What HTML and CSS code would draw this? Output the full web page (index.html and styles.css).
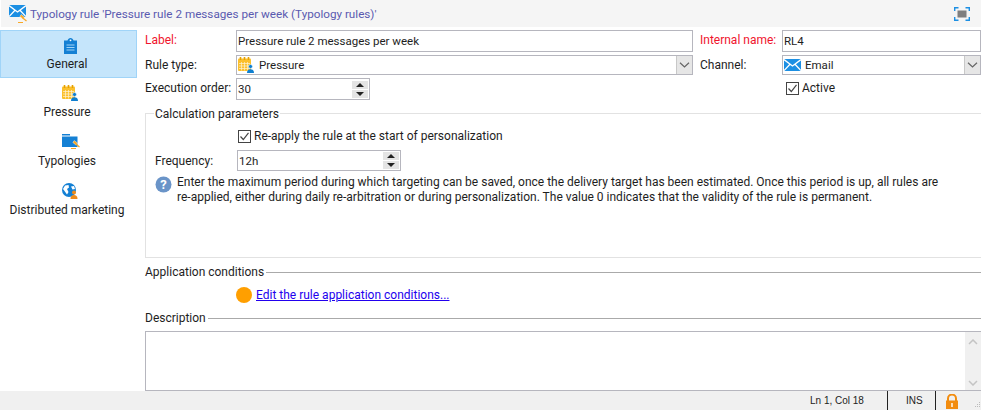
FILE: index.html
```html
<!DOCTYPE html>
<html lang="en">
<head>
<meta charset="utf-8">
<title>Typology rule</title>
<link rel="stylesheet" href="styles.css">
</head>
<body>
<svg class="defs" width="0" height="0" aria-hidden="true">
  <defs>
    <symbol id="i-mail" viewBox="0 0 17 12"><rect width="17" height="12" fill="#1c8fe3"/><path d="M0 .6 8.5 7 17 .6M0 11.6 6 5.2M17 11.6 11 5.2" fill="none" stroke="#fff" stroke-width="1.3"/></symbol>
    <symbol id="i-cal" viewBox="0 0 16 16"><rect x="0" y="1.500" width="13" height="12.500" rx="1" fill="#fbc02d"/><path d="M2.500 0v3M6.500 0v3M10.500 0v3" stroke="#e6a100" stroke-width="1.600"/><path d="M1 6.500h11M1 9h11M1 11.500h11M3.500 5v8.500M6.500 5v8.500M9.500 5v8.500" stroke="#fff" stroke-width=".7" opacity=".8"/><circle cx="12.500" cy="9.500" r="2" fill="#0f7fd0" stroke="#fff" stroke-width=".5"/><path d="M9 16c0-3 1.500-3.800 3.500-3.800S16 13 16 16z" fill="#0f7fd0"/></symbol>
    <symbol id="i-gavel" viewBox="0 0 9 9"><path d="M3.200.5 6.500 3 5 5 1.800 2.500z" fill="#f9a825" stroke="#fff" stroke-width=".4"/><path d="M4.500 3.800 8.500 7" stroke="#f9a825" stroke-width="1.300"/><path d="M0 8h5v1H0z" fill="#f9a825"/></symbol>
  </defs>
</svg>
<div class="window">
  <header class="titlebar">
    <span class="title-icon">
      <svg class="i-mail" width="17" height="12"><use href="#i-mail"/></svg>
      <svg class="i-gavel" width="9" height="9"><use href="#i-gavel"/></svg>
    </span>
    <span class="title-text">Typology rule 'Pressure rule 2 messages per week (Typology rules)'</span>
    <svg class="expand" width="16" height="14" viewBox="0 0 16 14"><path d="M.7 4V.7H4.500M11.500.7h3.800V4M15.300 10v3.300h-3.800M4.500 13.300H.7V10" fill="none" stroke="#1c8fe3" stroke-width="1.400"/><rect x="3.500" y="3.500" width="9" height="7" fill="#7f7f7f"/></svg>
  </header>
  <div class="main">
    <nav class="sidebar">
      <a class="nav-item active">
        <svg width="13" height="16" viewBox="0 0 13 16"><path d="M0 2.500h3.500C4 1 5 0 6.500 0S9 1 9.500 2.500H13V16H0z" fill="#1480d4"/><circle cx="6.500" cy="2.300" r=".9" fill="#fff"/><path d="M2.500 7h8M2.500 9.500h8M2.500 12h8" stroke="#9fd2f5" stroke-width="1"/></svg>
        <span>General</span>
      </a>
      <a class="nav-item">
        <svg width="16" height="16"><use href="#i-cal"/></svg>
        <span>Pressure</span>
      </a>
      <a class="nav-item">
        <span class="nav-typo">
          <svg width="16" height="13" viewBox="0 0 16 13"><path d="M0 0h8v1.500H0zM0 2.500h15.500V13H0z" fill="#1480d4"/></svg>
          <svg class="i-gavel" width="9" height="9"><use href="#i-gavel"/></svg>
        </span>
        <span>Typologies</span>
      </a>
      <a class="nav-item">
        <svg width="16" height="16" viewBox="0 0 16 16"><circle cx="7" cy="7" r="7" fill="#1480d4"/><path d="M3 2.500 6.500 2 7 4.500 5 6 6.500 9 5 11.500 2.500 8 1 6zM9 3.500l3-.5 1 3-2.500.5z" fill="#fff"/><circle cx="12" cy="9.500" r="2" fill="#ef8b1a"/><path d="M8.500 16c0-3 1.500-4 3.500-4s3.500 1 3.500 4z" fill="#ef8b1a"/></svg>
        <span>Distributed marketing</span>
      </a>
    </nav>
    <main class="content">
      <div class="top-form">
        <label class="req">Label:</label>
        <div class="field"><span class="field-text">Pressure rule 2 messages per week</span></div>
        <label class="req col3">Internal name:</label>
        <div class="field"><span class="field-text">RL4</span></div>

        <label>Rule type:</label>
        <div class="field select">
          <svg class="sel-icon" width="16" height="16"><use href="#i-cal"/></svg>
          <span class="field-text">Pressure</span>
          <span class="drop"><svg width="11" height="6" viewBox="0 0 11 6"><path d="M1 .8 5.500 5 10 .8" fill="none" stroke="#666" stroke-width="1.200"/></svg></span>
        </div>
        <label class="col3">Channel:</label>
        <div class="field select">
          <svg class="sel-icon sel-mail" width="17" height="12"><use href="#i-mail"/></svg>
          <span class="field-text">Email</span>
          <span class="drop"><svg width="11" height="6" viewBox="0 0 11 6"><path d="M1 .8 5.500 5 10 .8" fill="none" stroke="#666" stroke-width="1.200"/></svg></span>
        </div>

        <label>Execution order:</label>
        <div class="field spin order">
          <span class="field-text">30</span>
          <span class="spin-btns"><i class="up"></i><i class="down"></i></span>
        </div>
        <span></span>
        <div class="check active-check"><span class="box"><svg width="13" height="13" viewBox="0 0 13 13"><path d="M2.500 6.500 5.300 9.500 10.500 2.800" fill="none" stroke="#444" stroke-width="1.200"/></svg></span><span>Active</span></div>
      </div>

      <fieldset class="params">
        <legend>Calculation parameters</legend>
        <div class="check reapply"><span class="box"><svg width="13" height="13" viewBox="0 0 13 13"><path d="M2.500 6.500 5.300 9.500 10.500 2.800" fill="none" stroke="#444" stroke-width="1.200"/></svg></span><span>Re-apply the rule at the start of personalization</span></div>
        <div class="freq">
          <label>Frequency:</label>
          <div class="field spin freq-field">
            <span class="field-text">12h</span>
            <span class="spin-btns"><i class="up"></i><i class="down"></i></span>
          </div>
        </div>
        <div class="help">
          <svg width="17" height="17" viewBox="0 0 17 17"><circle cx="8.500" cy="8.500" r="8" fill="#6a94c8"/><text x="8.500" y="13" text-anchor="middle" class="help-q">?</text></svg>
          <p>Enter the maximum period during which targeting can be saved, once the delivery target has been estimated. Once this period is up, all rules are re-applied, either during daily re-arbitration or during personalization. The value 0 indicates that the validity of the rule is permanent.</p>
        </div>
      </fieldset>

      <div class="sep first"><span>Application conditions</span><hr></div>
      <div class="cond"><span class="dot"></span><a class="link">Edit the rule application conditions...</a></div>
      <div class="sep desc-sep"><span>Description</span><hr></div>
      <div class="desc">
        <div class="scroll">
          <svg width="10" height="6" viewBox="0 0 10 6"><path d="M1 5 5 1l4 4" fill="none" stroke="#c4c4c4" stroke-width="1.500"/></svg>
          <svg width="10" height="6" viewBox="0 0 10 6"><path d="M1 1l4 4 4-4" fill="none" stroke="#c4c4c4" stroke-width="1.500"/></svg>
        </div>
      </div>
    </main>
  </div>
  <footer class="status">
    <span class="st-pos">Ln 1, Col 18</span>
    <span class="st-ins">INS</span>
    <svg class="lock" width="14" height="15" viewBox="0 0 14 15"><path d="M3 7V4.500a4 4 0 0 1 8 0V7" fill="none" stroke="#f28c0f" stroke-width="2"/><rect x="1" y="6.500" width="12" height="8.500" fill="#f28c0f"/><rect x="6.300" y="9" width="1.400" height="4" fill="#fff"/></svg>
    <svg class="grip" width="8" height="8" viewBox="0 0 8 8"><path d="M6 1h1v1H6zM4 3h1v1H4zM6 3h1v1H6zM2 5h1v1H2zM4 5h1v1H4zM6 5h1v1H6z" fill="#bbb"/></svg>
  </footer>
</div>
</body>
</html>
```
FILE: styles.css
```css
* { box-sizing: border-box; }
html, body { margin: 0; height: 100%; background: #fff; overflow: hidden; }
body { font: 12px/16px Roboto, "Open Sans", sans-serif; color: #1e1e1e; }
.defs { display: block; height: 0; }
.window { display: flex; flex-direction: column; width: 981px; height: 410px; }

.titlebar { flex: 0 0 27px; margin-left: 1px; background: #f5f5f5; display: flex; align-items: center; padding: 0 11px 0 8px; }
.title-icon { position: relative; width: 21px; height: 18px; }
.title-icon .i-mail { position: absolute; left: 0; top: 0; }
.title-icon .i-gavel { position: absolute; left: 9px; top: 9px; }
.title-text { flex: 1; color: #5a5ab0; font-size: 11.7px; }
.expand { flex: none; }

.main { flex: 1; display: flex; min-height: 0; padding-top: 3px; }
.sidebar { flex: 0 0 137px; display: flex; flex-direction: column; }
.nav-item { display: flex; flex-direction: column; align-items: center; height: 49px; padding: 7px 3px 0 0; gap: 3px; color: #1e1e1e; white-space: nowrap; }
.nav-item > svg, .nav-typo { margin-left: 6px; }
.nav-item svg { display: block; }
.nav-item.active { height: 48px; background: #c5e5fb; border: 1px solid #a0d4f8; padding: 7px 3px 0 0; gap: 2px; }
.nav-typo { position: relative; display: block; width: 16px; height: 16px; }
.nav-typo .i-gavel { position: absolute; left: 9px; top: 6px; }

.content { flex: 1; min-width: 0; padding-left: 8px; display: flex; flex-direction: column; }
.top-form { display: grid; grid-template-columns: 91px 457px 89px 199px; grid-template-rows: 22px 20px 22px; row-gap: 3px; align-items: start; }
.top-form label { line-height: 20px; white-space: nowrap; }
.col3 { padding-left: 7px; }
.req { color: #f0142d; }
.field { height: 22px; border: 1px solid #b6b6be; background: #fff; display: flex; align-items: center; padding-left: 1px; min-width: 0; }
.field-text { flex: 1; min-width: 0; white-space: nowrap; font-size: 11.5px; }
.select .sel-icon { margin-right: 5px; flex: none; }
.select .sel-mail { margin-right: 4px; }
.select { height: 20px; }
.drop { flex: none; width: 16px; height: 18px; background: #e6e6e6; border-left: 1px solid #c8c8c8; display: flex; align-items: center; justify-content: center; }
.spin { position: relative; }
.order { width: 134px; }
.spin-btns { flex: none; width: 16px; margin-right: 1px; display: flex; flex-direction: column; gap: 1px; }
.spin-btns i { display: block; height: 8px; background: #e4e4e4; position: relative; }
.spin-btns i::after { content: ""; position: absolute; left: 4px; border-left: 4px solid transparent; border-right: 4px solid transparent; }
.spin-btns .up::after { top: 2px; border-bottom: 4px solid #222; }
.spin-btns .down::after { top: 2px; border-top: 4px solid #222; }

.check { display: flex; align-items: center; gap: 3px; }
.box { width: 13px; height: 13px; border: 1px solid #444; background: #fff; display: block; flex: none; }
.box svg { display: block; margin: -1px; }
.active-check { padding-left: 4px; height: 20px; }

.params { margin: 5px 0 0; padding: 6px 0 0 9px; height: 153px; border: 1px solid #e2e2e2; border-right: 0; flex: none; }
.params legend { padding: 1px 1px 0; margin-left: -1px; line-height: 16px; }
.reapply { margin-left: 83px; height: 16px; }
.freq { display: flex; align-items: center; margin-top: 6px; }
.freq label { width: 82px; }
.freq-field { width: 164px; height: 21px; }
.help { display: flex; gap: 5px; margin-top: 4px; }
.help svg { flex: none; margin-top: 1px; }
.help p { margin: 0; line-height: 15px; width: 775px; flex: none; }
.help-q { font: bold 13px Roboto, sans-serif; fill: #fff; }

.sep { display: flex; align-items: center; gap: 2px; height: 16px; }
.sep.first { margin-top: 6px; }
.sep.desc-sep { margin-top: 4px; }
.sep hr { flex: 1; margin: 0; border: 0; border-top: 1px solid #aaa; }
.cond { display: flex; align-items: center; gap: 4px; height: 22px; margin: 4px 0 0 91px; }
.dot { width: 16px; height: 16px; border-radius: 50%; background: #ff9f00; flex: none; }
.link { color: #2200ee; text-decoration: underline; }
.desc { flex: 1; margin-top: 5px; border: 1px solid #b6b6be; border-right: 0; background: #fff; display: flex; justify-content: flex-end; min-height: 0; }
.scroll { width: 16px; background: #f0f0f0; display: flex; flex-direction: column; justify-content: space-between; align-items: center; padding: 7px 0 4px; }

.status { flex: 0 0 19px; background: #f0f0f0; display: flex; align-items: center; font: 10px/14px "Liberation Sans", Arial, sans-serif; color: #222; overflow: hidden; }
.st-pos { margin-left: 810px; width: 78px; height: 19px; line-height: 19px; border-right: 1px solid #222; }
.st-ins { width: 48px; padding-left: 18px; height: 19px; line-height: 19px; border-right: 1px solid #222; }
.lock { margin: 3px 0 0 9px; flex: none; align-self: flex-start; }
.grip { margin: auto 0 1px 14px; flex: none; }
```
